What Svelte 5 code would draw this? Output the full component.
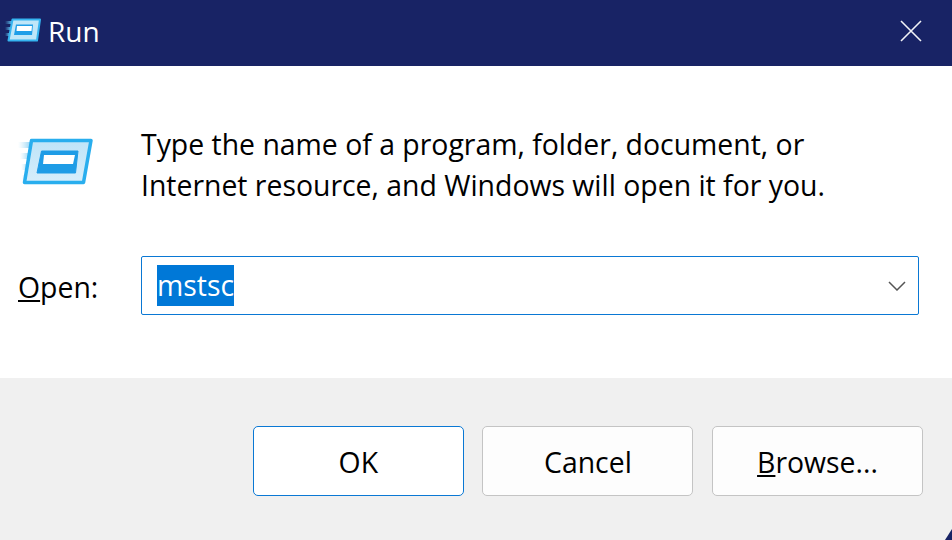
<script>
  const buttons = [
    { key: '', post: 'OK', primary: true },
    { key: '', post: 'Cancel', primary: false },
    { key: 'B', post: 'rowse...', primary: false }
  ];
</script>

<div class="dialog">
  <header class="titlebar">
    <svg class="title-icon" width="38" height="26" viewBox="0 0 38 26">
      <defs>
        <linearGradient id="fade-small" x1="0" x2="1">
          <stop offset="0" stop-color="#5fc0f0" stop-opacity="0"/>
          <stop offset="1" stop-color="#5fc0f0"/>
        </linearGradient>
      </defs>
      <rect x="0" y="3" width="7" height="3" fill="url(#fade-small)"/>
      <rect x="0" y="9" width="6" height="3" fill="url(#fade-small)"/>
      <rect x="0" y="15" width="5" height="3" fill="url(#fade-small)"/>
      <path d="M7.5 1.5H35L32 22.5H3.5Z" fill="#bfe6f8" stroke="#35b4f0" stroke-width="2" stroke-linejoin="round"/>
      <path d="M11 6.5H28L27 17H9Z" fill="#1f9ee8"/>
      <path d="M12 8H27L26.5 13H11.5Z" fill="#fff"/>
    </svg>
    <span class="title">Run</span>
    <svg class="close" width="22" height="22" viewBox="0 0 22 22">
      <path d="M1 1L21 21M21 1L1 21" stroke="#f2f3f7" stroke-width="1.6" fill="none"/>
    </svg>
  </header>

  <main class="content">
    <div class="message">
      <svg class="big-icon" width="76" height="48" viewBox="0 0 76 48">
        <defs>
          <linearGradient id="fade" x1="0" x2="1">
            <stop offset="0" stop-color="#bfe6f8" stop-opacity="0"/>
            <stop offset="1" stop-color="#8fd2f4"/>
          </linearGradient>
          <linearGradient id="panel" x1="0" x2="0" y1="0" y2="1">
            <stop offset="0" stop-color="#bfe4f8"/>
            <stop offset="1" stop-color="#d6eefb"/>
          </linearGradient>
        </defs>
        <rect x="0" y="4" width="13" height="6" fill="url(#fade)"/>
        <rect x="2" y="15" width="10" height="6" fill="url(#fade)"/>
        <rect x="3" y="26" width="8" height="6" fill="url(#fade)"/>
        <rect x="4" y="37" width="6" height="7" fill="url(#fade)"/>
        <path d="M13.5 2.5H73L65.5 44.5H6.5Z" fill="url(#panel)" stroke="#29aeee" stroke-width="3.5" stroke-linejoin="round"/>
        <path d="M23.5 13H60L57.5 35H19Z" fill="#1e9ce6" stroke="#1e9ce6" stroke-width="1" stroke-linejoin="round"/>
        <path d="M26 17H57L55 26H25Z" fill="#fff"/>
      </svg>
      <p class="text">Type the name of a program, folder, document, or<br />Internet resource, and Windows will open it for you.</p>
    </div>

    <div class="open-row">
      <span class="open-label"><u>O</u>pen:</span>
      <div class="combo">
        <span class="selection">mstsc</span>
        <svg class="chevron" width="18" height="10" viewBox="0 0 18 10">
          <path d="M1 1L9 9L17 1" stroke="#555" stroke-width="1.5" fill="none"/>
        </svg>
      </div>
    </div>
  </main>

  <footer class="footer">
    {#each buttons as b}
      <button class="btn" class:primary={b.primary}>{#if b.key}<u>{b.key}</u>{/if}{b.post}</button>
    {/each}
    <span class="corner"></span>
  </footer>
</div>

<style>
  :global(body) {
    margin: 0;
    background: #f0f0f0;
  }
  .dialog {
    width: 952px;
    height: 540px;
    display: flex;
    flex-direction: column;
    overflow: hidden;
    font-family: "Open Sans", "Noto Sans", sans-serif;
    color: #000;
  }
  .titlebar {
    height: 66px;
    box-sizing: border-box;
    background: #182365;
    display: flex;
    align-items: center;
    padding: 0 30px 5px 5px;
  }
  .title-icon {
    flex: none;
    margin-top: 1px;
  }
  .title {
    color: #fff;
    font-size: 28px;
    margin-left: 5px;
    flex: 1;
  }
  .close {
    flex: none;
  }
  .content {
    height: 312px;
    background: #fff;
    box-sizing: border-box;
    padding-top: 58px;
  }
  .message {
    display: flex;
    align-items: flex-start;
    padding-left: 18px;
  }
  .big-icon {
    flex: none;
    margin-top: 14px;
  }
  .text {
    margin: 0 0 0 47px;
    font-size: 28.4px;
    line-height: 41px;
    white-space: nowrap;
  }
  .open-row {
    display: flex;
    align-items: center;
    margin-top: 50px;
    padding-left: 18px;
  }
  .open-label {
    width: 123px;
    font-size: 28.4px;
    padding-top: 3px;
  }
  .combo {
    width: 778px;
    height: 59px;
    box-sizing: border-box;
    border: 1px solid #0a78d4;
    border-radius: 2px;
    display: flex;
    align-items: center;
    justify-content: space-between;
    padding: 0 12px 0 15px;
  }
  .selection {
    background: #0078d7;
    color: #fff;
    font-size: 28.4px;
    line-height: 41px;
    height: 41px;
  }
  .footer {
    flex: 1;
    position: relative;
    background: #f0f0f0;
    display: flex;
    align-items: flex-start;
    justify-content: flex-end;
    gap: 18.6px;
    padding: 48px 29px 0 0;
  }
  .btn {
    width: 211px;
    height: 70px;
    box-sizing: border-box;
    background: #fdfdfd;
    border: 1px solid #c4c4c4;
    border-radius: 5px;
    font: inherit;
    font-size: 28.4px;
    color: #000;
    padding: 2px 0 0;
  }
  .btn.primary {
    border-color: #0a78d4;
    background: #fff;
  }
  .corner {
    position: absolute;
    right: 0;
    bottom: 0;
    width: 0;
    height: 0;
    border-style: solid;
    border-width: 0 0 11px 7px;
    border-color: transparent transparent #182365 transparent;
  }
</style>
